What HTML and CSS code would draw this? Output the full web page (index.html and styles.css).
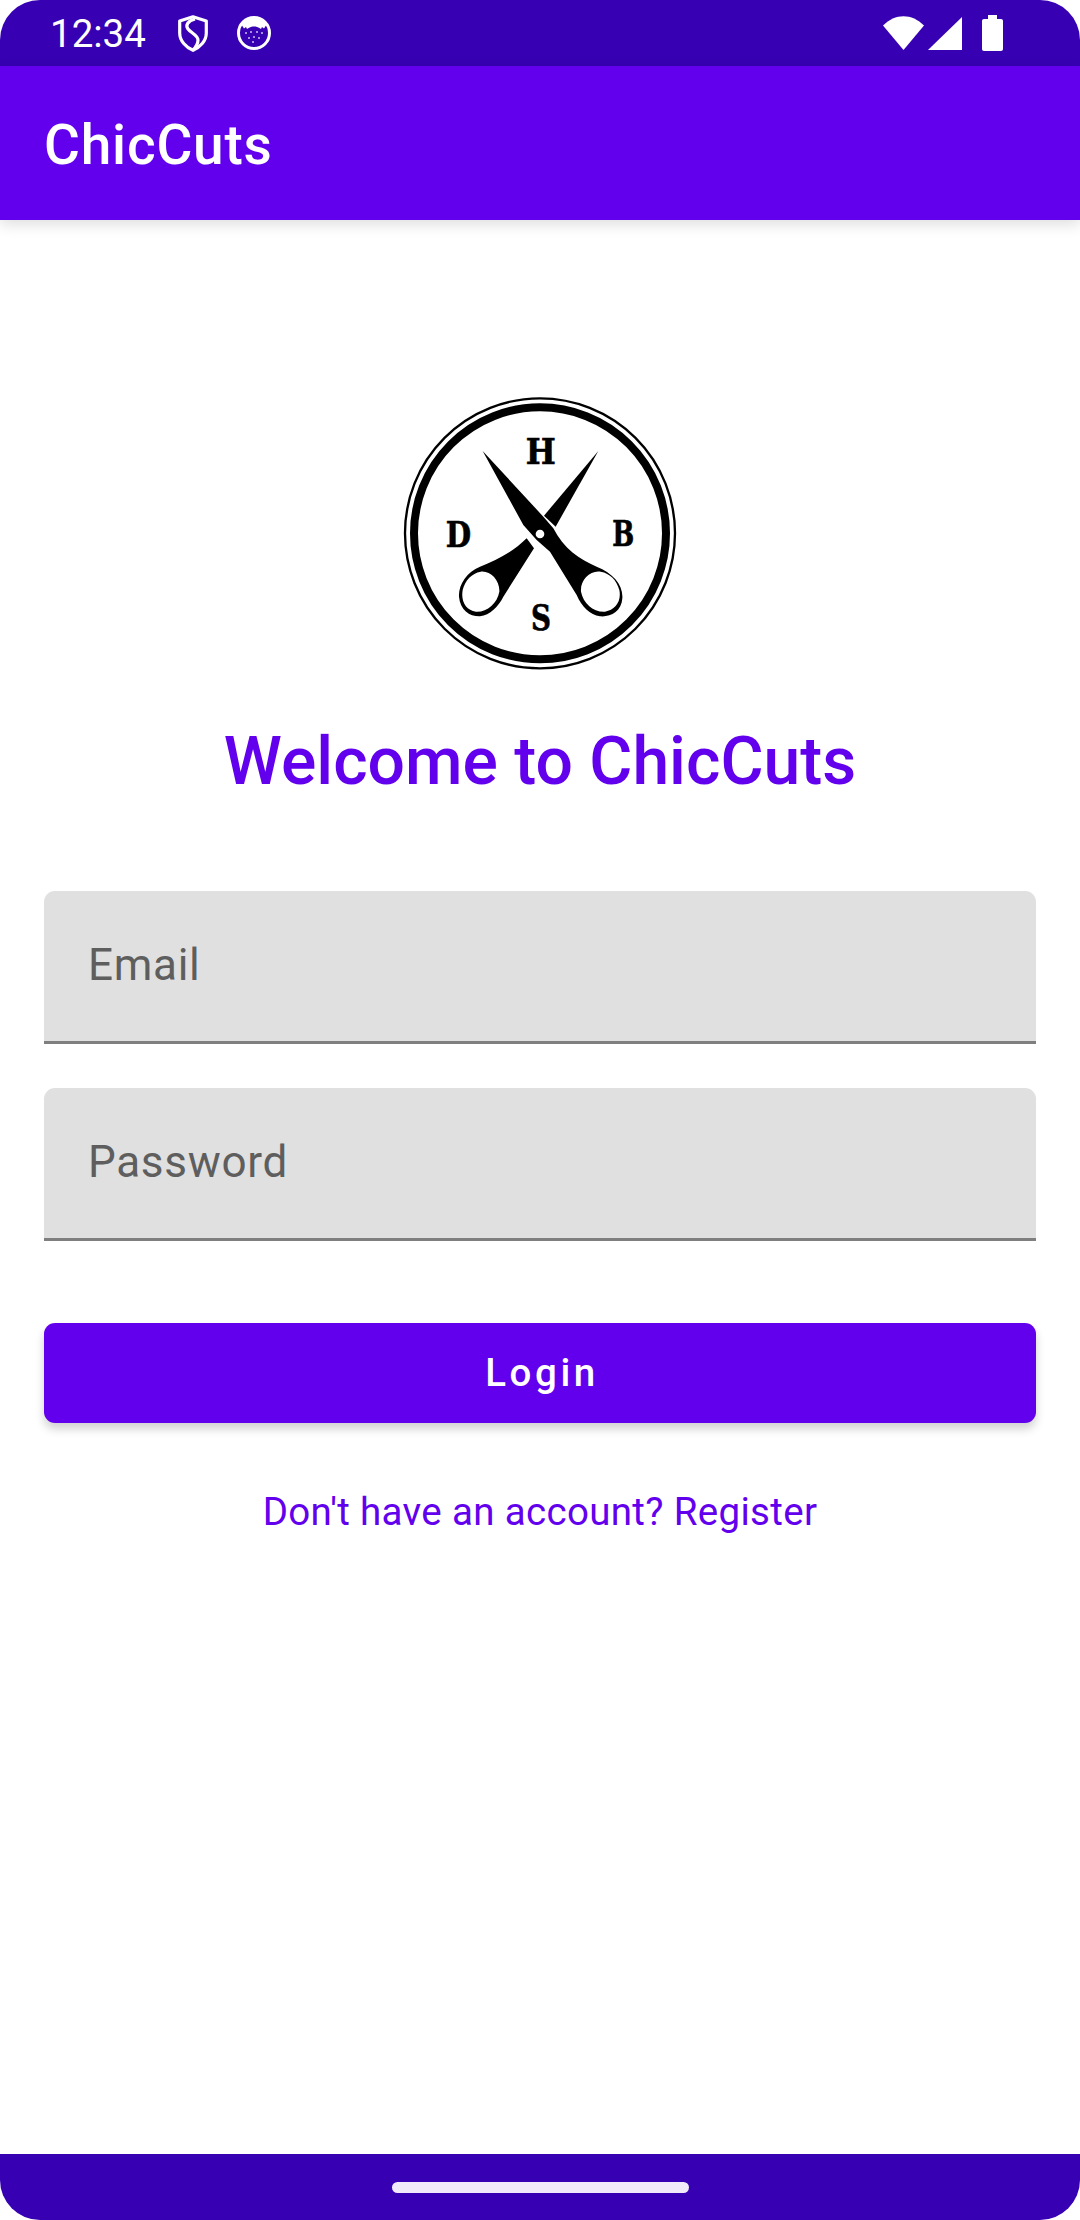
FILE: index.html
```html
<!DOCTYPE html>
<html lang="en">
<head>
    <meta charset="UTF-8">
    <meta name="viewport" content="width=device-width, initial-scale=1.0">
    <title>ChicCuts</title>
    <link rel="stylesheet" href="styles.css">
</head>
<body>
<div class="screen">

    <!-- status bar -->
    <div class="status">
        <span class="time">12:34</span>
        <svg class="ic-shield" viewBox="0 0 30 37">
            <path d="M15 1.800 L28.300 6 V18 C28.300 26 22 32.500 15 35.300 C8 32.500 1.700 26 1.700 18 V6 Z" fill="none" stroke="#fff" stroke-width="3.2" stroke-linejoin="round"/>
            <path d="M17 4 C10 6 7 10 10 14 C13 18 20 20 20 25 C20 29 17 33 15 35" fill="none" stroke="#fff" stroke-width="3.200"/>
        </svg>
        <svg class="ic-cat" viewBox="0 0 34 34">
            <circle cx="17" cy="17" r="15.500" fill="none" stroke="#fff" stroke-width="3"/>
            <path d="M4 8 L7 12.500 L9 11 L10 13 C13 11 15 10.500 17 10.500 C19 10.500 21 11 24 13 L25 11 L27 12.500 L30 8 C26 3 21 2 17 2 C13 2 8 3 4 8 Z" fill="#fff"/>
            <g fill="#fff" opacity=".75">
                <circle cx="9" cy="17" r="1"/><circle cx="14" cy="16" r="1"/><circle cx="20" cy="16" r="1"/><circle cx="25" cy="17" r="1"/>
                <circle cx="12" cy="22" r="1"/><circle cx="17" cy="21" r="1"/><circle cx="22" cy="22" r="1"/><circle cx="16" cy="26" r="1"/>
            </g>
        </svg>
        <div class="status-right">
            <svg class="ic-wifi" viewBox="0 0 41 34"><path d="M0 9.500 C12 -3 29 -3 41 9.500 L20.500 34 Z" fill="#fff"/></svg>
            <svg class="ic-signal" viewBox="0 0 34 33"><path d="M34 0 V33 H0 Z" fill="#fff"/></svg>
            <svg class="ic-battery" viewBox="0 0 21 36"><path d="M6 0 H15 V4 H19 C20.200 4 21 4.800 21 6 V34 C21 35.200 20.200 36 19 36 H2 C.8 36 0 35.200 0 34 V6 C0 4.800 .8 4 2 4 H6 Z" fill="#fff"/></svg>
        </div>
    </div>

    <!-- app bar -->
    <div class="appbar">ChicCuts</div>

    <!-- login form -->
    <div class="main">
        <svg class="logo" viewBox="36 30 828 828">
            <circle cx="450" cy="445" r="405" fill="none" stroke="#000" stroke-width="7"/>
            <circle cx="450" cy="445" r="378" fill="none" stroke="#000" stroke-width="24"/>
            <path d="M278 198 L460 395 L490 430 C520 490 570 525 620 545 C670 565 700 600 697 640 C695 680 660 697 630 694 C600 690 575 665 560 630 L480 500 L440 465 L400 420 Z M632 560 C600 555 570 585 573 620 C580 655 610 682 645 680 C675 675 695 650 688 615 C680 585 660 565 632 560 Z" fill="#000" fill-rule="evenodd"/>
            <path d="M625 198 L497 425 L462 392 Z" fill="#000"/>
            <path d="M410 460 C370 500 320 525 270 545 C230 560 205 600 207 635 C210 675 240 695 270 694 C300 690 325 665 340 635 L432 490 Z M272 560 C300 556 330 585 328 620 C322 655 290 682 258 680 C228 675 212 650 218 615 C226 585 245 565 272 560 Z" fill="#000" fill-rule="evenodd"/>
            <circle cx="450" cy="447" r="13" fill="#fff"/>
            <g class="logo-letters">
                <text x="452" y="238" textLength="90" lengthAdjust="spacingAndGlyphs">H</text>
                <text x="205" y="486" textLength="76" lengthAdjust="spacingAndGlyphs">D</text>
                <text x="700" y="484" textLength="66" lengthAdjust="spacingAndGlyphs">B</text>
                <text x="453" y="734" textLength="60" lengthAdjust="spacingAndGlyphs">S</text>
            </g>
        </svg>

        <h1 class="welcome">Welcome to ChicCuts</h1>

        <div class="field">Email</div>
        <div class="field">Password</div>

        <div class="btn">Login</div>
        <div class="register">Don't have an account? Register</div>
    </div>

    <!-- nav bar -->
    <div class="navbar"><div class="handle"></div></div>
</div>
</body>
</html>
```

FILE: styles.css
```css
*{
    box-sizing: border-box;
}

html, body{
    margin: 0;
    padding: 0;
    background-color: #fff;
}

.screen{
    width: 1080px;
    height: 2220px;
    display: flex;
    flex-direction: column;
    font-family: Roboto, sans-serif;
    overflow: hidden;
}

.status{
    height: 66px;
    background-color: #3700b3;
    border-radius: 40px 40px 0 0;
    display: flex;
    align-items: center;
    padding-left: 50px;
    color: #fff;
}

.time{
    font-size: 38.5px;
    width: 128px;
}

.ic-shield{
    width: 30px;
    height: 37px;
    margin-right: 29px;
}

.ic-cat{
    width: 34px;
    height: 34px;
}

.status-right{
    margin-left: auto;
    margin-right: 77px;
    display: flex;
    align-items: center;
}

.ic-wifi{
    width: 41px;
    height: 34px;
    margin-right: 4px;
}

.ic-signal{
    width: 34px;
    height: 33px;
    margin-right: 20px;
}

.ic-battery{
    width: 21px;
    height: 36px;
}

.appbar{
    height: 154px;
    background-color: #6200ee;
    color: #fff;
    font-size: 55px;
    font-weight: 500;
    letter-spacing: .8px;
    padding-left: 44px;
    line-height: 158px;
    box-shadow: 0 4px 14px rgba(0, 0, 0, 0.14);
    position: relative;
}

.main{
    flex: 1;
    padding: 175px 44px 0;
    display: flex;
    flex-direction: column;
    align-items: center;
}

.logo{
    width: 276px;
    height: 276px;
    display: block;
}

.logo-letters{
    font-family: "DejaVu Serif", serif;
    font-weight: bold;
    font-size: 106px;
    text-anchor: middle;
    stroke: #000;
    stroke-width: 2px;
}

.welcome{
    margin: 52px 0 0;
    font-size: 66px;
    font-weight: 500;
    color: #6200ee;
    line-height: 78px;
    height: 78px;
}

.field{
    width: 100%;
    height: 153px;
    background-color: #e0e0e0;
    border-bottom: 3px solid #7f7f7f;
    border-radius: 11px 11px 0 0;
    padding-left: 44px;
    font-size: 44px;
    line-height: 148px;
    letter-spacing: .7px;
    color: #5e5e5e;
    margin-bottom: 44px;
}

.welcome + .field{
    margin-top: 90px;
}

.btn{
    width: 100%;
    height: 100px;
    margin-top: 38px;
    padding-left: 4px;
    background-color: #6200ee;
    color: #fff;
    border-radius: 11px;
    font-size: 38.5px;
    font-weight: 500;
    letter-spacing: 3.6px;
    text-align: center;
    line-height: 100px;
    box-shadow: 0 6px 10px rgba(0, 0, 0, 0.18);
}

.register{
    margin-top: 66px;
    font-size: 38.5px;
    line-height: 46px;
    letter-spacing: .33px;
    color: #6200ee;
}

.navbar{
    height: 66px;
    background-color: #3700b3;
    border-radius: 0 0 40px 40px;
    display: flex;
    justify-content: center;
    padding-top: 28px;
}

.handle{
    width: 297px;
    height: 11px;
    border-radius: 6px;
    background-color: #f0eafa;
}
```
